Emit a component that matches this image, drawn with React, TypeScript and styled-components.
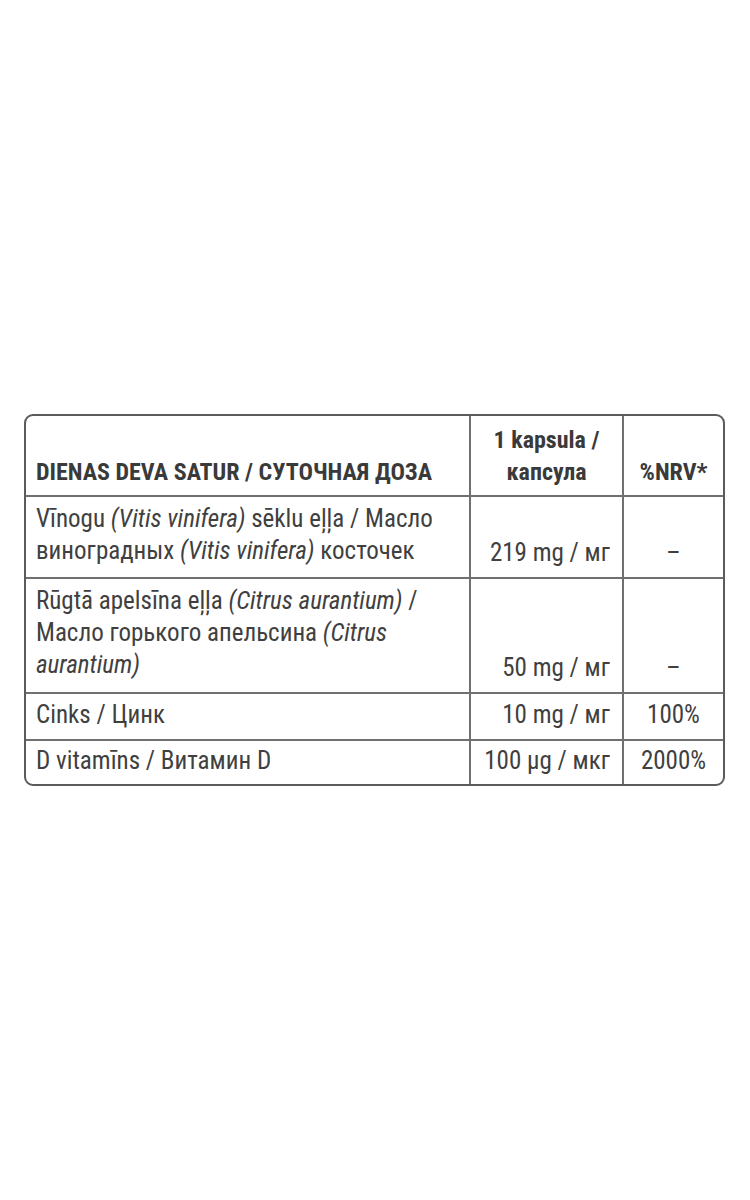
import React from "react";
import styled, { createGlobalStyle } from "styled-components";

const GlobalStyle = createGlobalStyle`
  html, body {
    margin: 0;
    padding: 0;
    background: #ffffff;
  }
  body {
    font-family: "Roboto Condensed", "Liberation Sans Narrow", "DejaVu Sans Condensed", sans-serif;
    color: #404040;
  }
`;

const Page = styled.div`
  width: 750px;
  height: 1200px;
  box-sizing: border-box;
  padding: 414px 25px 0 24px;
`;

const Table = styled.div`
  display: grid;
  grid-template-columns: 445px 153px 1fr;
  grid-template-rows: 81px 82px 115px 47px 44px;
  border: 2px solid #5b5b5b;
  border-radius: 9px;
  overflow: hidden;
  box-sizing: border-box;
  width: 701px;
  height: 372px;
`;

const Cell = styled.div<{ $align?: "left" | "right" | "center"; $last?: boolean; $lastRow?: boolean; $valign?: "start" | "end" }>`
  display: flex;
  flex-direction: column;
  justify-content: ${(p) => (p.$valign === "start" ? "flex-start" : "flex-end")};
  text-align: ${(p) => p.$align || "left"};
  border-right: ${(p) => (p.$last ? "none" : "2px solid #707070")};
  border-bottom: ${(p) => (p.$lastRow ? "none" : "2px solid #707070")};
  padding: 6px ${(p) => (p.$align === "right" ? "12px" : p.$align === "center" ? "4px" : "8px")} 8px ${(p) => (p.$align === "left" || !p.$align ? "10px" : "4px")};
  font-size: 25px;
  line-height: 32px;
  white-space: nowrap;
  box-sizing: border-box;
  min-width: 0;
`;

const HeadCell = styled(Cell)`
  font-weight: 700;
  font-size: 24px;
  color: #3a3a3a;
  padding-bottom: 7px;
`;

const Latin = styled.i`
  font-style: italic;
`;

type Row = {
  name: React.ReactNode;
  amount: string;
  nrv: string;
};

const rows: Row[] = [
  {
    name: (
      <>
        <div>
          Vīnogu <Latin>(Vitis vinifera)</Latin> sēklu eļļa / Масло
        </div>
        <div>
          виноградных <Latin>(Vitis vinifera)</Latin> косточек
        </div>
      </>
    ),
    amount: "219 mg / мг",
    nrv: "–",
  },
  {
    name: (
      <>
        <div>
          Rūgtā apelsīna eļļa <Latin>(Citrus aurantium)</Latin> /
        </div>
        <div>
          Масло горького апельсина <Latin>(Citrus</Latin>
        </div>
        <div>
          <Latin>aurantium)</Latin>
        </div>
      </>
    ),
    amount: "50 mg / мг",
    nrv: "–",
  },
  { name: "Cinks / Цинк", amount: "10 mg / мг", nrv: "100%" },
  { name: "D vitamīns / Витамин D", amount: "100 µg / мкг", nrv: "2000%" },
];

export default function App() {
  return (
    <>
      <GlobalStyle />
      <Page>
        <Table>
          <HeadCell>DIENAS DEVA SATUR / СУТОЧНАЯ ДОЗА</HeadCell>
          <HeadCell $align="center">
            <div>1 kapsula /</div>
            <div>капсула</div>
          </HeadCell>
          <HeadCell $align="center" $last>
            %NRV*
          </HeadCell>
          {rows.map((r, i) => {
            const lastRow = i === rows.length - 1;
            return (
              <React.Fragment key={i}>
                <Cell $valign={i < 2 ? "start" : "end"} $lastRow={lastRow}>
                  {r.name}
                </Cell>
                <Cell $align="right" $lastRow={lastRow}>
                  {r.amount}
                </Cell>
                <Cell $align="center" $last $lastRow={lastRow}>
                  {r.nrv}
                </Cell>
              </React.Fragment>
            );
          })}
        </Table>
      </Page>
    </>
  );
}
